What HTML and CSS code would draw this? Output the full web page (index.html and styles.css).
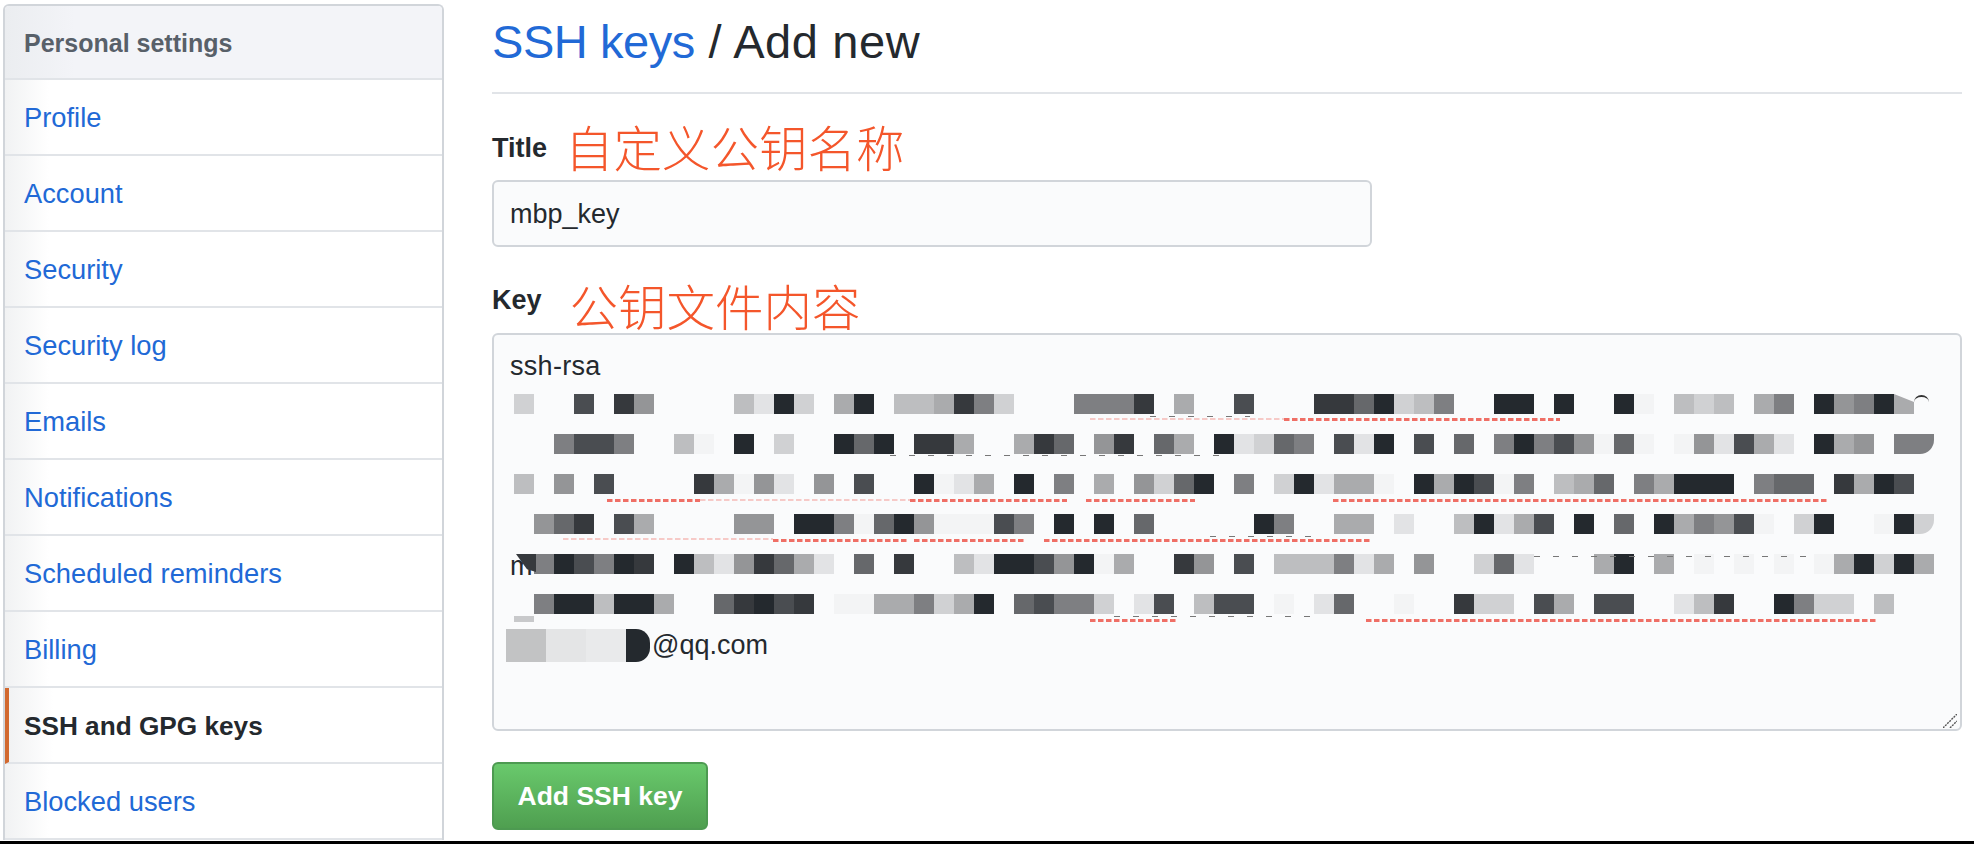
FILE: index.html
```html
<!DOCTYPE html>
<html lang="en">
<head>
    <meta charset="UTF-8">
    <title>SSH keys / Add new</title>
    <link rel="stylesheet" href="styles.css">
</head>
<body>
    <div class="page">
        <nav class="sidebar">
            <h3 class="sidebar-title">Personal settings</h3>
            <a class="sidebar-item" href="#">Profile</a>
            <a class="sidebar-item" href="#">Account</a>
            <a class="sidebar-item" href="#">Security</a>
            <a class="sidebar-item" href="#">Security log</a>
            <a class="sidebar-item" href="#">Emails</a>
            <a class="sidebar-item" href="#">Notifications</a>
            <a class="sidebar-item" href="#">Scheduled reminders</a>
            <a class="sidebar-item" href="#">Billing</a>
            <a class="sidebar-item selected" href="#">SSH and GPG keys</a>
            <a class="sidebar-item" href="#">Blocked users</a>
        </nav>

        <main class="content">
            <h1 class="page-title"><a href="#">SSH keys</a> / Add new</h1>

            <div class="label-row title-row">
                <label>Title</label>
                <span class="note">自定义公钥名称</span>
            </div>
            <div class="input-box">mbp_key</div>

            <div class="label-row key-row">
                <label>Key</label>
                <span class="note">公钥文件内容</span>
            </div>
            <div class="key-box">
                <div class="key-line">ssh-rsa</div>
                <div class="mosaic" id="mosaic">
                    <span class="scrap-m">m</span>
                    <span class="scrap-wedge"></span>
                    <span class="scrap-arc"></span>
                </div>
                <div class="email-line">
                    <span class="blur">
                        <i class="blur-a"></i><i class="blur-b"></i><i class="blur-c"></i><i class="blur-d"></i>
                    </span>
                    <span>@qq.com</span>
                </div>
                <svg class="grip" width="14" height="14" viewBox="0 0 14 14">
                    <path d="M0 14 14 0M7 14l7-7" stroke="#555" stroke-width="1.4" stroke-dasharray="2 1" fill="none"/>
                </svg>
            </div>

            <button class="add-button">Add SSH key</button>
        </main>
    </div>
    <div class="bottom-edge"></div>

    <script>
        // Gray level of each 20px block, one string per blurred line ('.' = nothing there)
        const ROWS = [
            '3..9.a6....42b3.5b.445a73...777a.5..9...aa8b347..bb.b..b1.434.57.b67b5',
            '..7997..41.b.3..b8b.aa5..5a8.6a.85.b2387.92b.9.8.7b796181.162952.b56.77',
            '4.6.9....a5162.6.9..b125.b.7.5.638b.7.3b2551.b5b917.458.75bbb.788.a5b9',
            '.68a.95....66.bb718b611197.b.b.8.....b7..55.2..4b259.b.8.b57691.3b..1b3',
            '.7b97ba.b426a852.8.a..42bb96b15..a6.9.444725.6..382...5b.5.1.1.1.15b3b5',
            '.7bb4bb5..8ab9a.1155735b.89773.29.499.1.28..1..a33.95.99..24a..b733.4'
        ];

        // Leftovers around the blocks: [x, y, width], relative to the mosaic
        const SQUIGGLES = [
            [770, 24, 276], [93, 105, 93], [396, 105, 157], [572, 105, 109], [819, 105, 494],
            [259, 145, 135], [400, 145, 110], [530, 145, 326],
            [576, 225, 86], [852, 225, 510]
        ];
        const FAINT = [[576, 24, 194], [186, 105, 210], [49, 144, 210]];
        const RESIDUE = [
            [636, 22, 100], [376, 61, 336], [696, 142, 110], [1020, 162, 280], [600, 222, 206]
        ];

        const mosaic = document.getElementById('mosaic');

        ROWS.forEach((row) => {
            for (const ch of row) {
                const cell = document.createElement('span');
                if (ch !== '.') cell.className = 'g' + ch;
                mosaic.appendChild(cell);
            }
            // fill up the row so the next one starts on column 0
            for (let i = row.length; i < 71; i++) {
                mosaic.appendChild(document.createElement('span'));
            }
        });

        function addLine(item, className) {
            const line = document.createElement('div');
            line.className = className;
            line.style.left = item[0] + 'px';
            line.style.top = item[1] + 'px';
            line.style.width = item[2] + 'px';
            mosaic.appendChild(line);
        }
        RESIDUE.forEach((s) => addLine(s, 'residue'));
        SQUIGGLES.forEach((s) => addLine(s, 'squiggle'));
        FAINT.forEach((s) => addLine(s, 'squiggle faint'));
    </script>
</body>
</html>
```

FILE: styles.css
```css
* {
    box-sizing: border-box;
}
html, body {
    height: 100%;
}
body {
    margin: 0;
    display: flex;
    flex-direction: column;
    overflow: hidden;
    background-color: #fff;
    color: #24292e;
    font-family: "Liberation Sans", Arial, sans-serif;
    font-size: 27px;
    line-height: 40px;
}
a {
    color: #2169d6;
    text-decoration: none;
}
.page {
    flex: 1;
    min-height: 0;
    display: flex;
    align-items: flex-start;
    padding: 4px 0 0 3px;
}
.bottom-edge {
    height: 3px;
    background-color: #000;
}

/* sidebar */
.sidebar {
    flex: none;
    width: 441px;
    display: flex;
    flex-direction: column;
    border: 2px solid #d1d5da;
    border-bottom: none;
    border-radius: 6px 6px 0 0;
}
.sidebar-title {
    margin: 0;
    height: 74px;
    padding: 17px 19px 0;
    border-bottom: 2px solid #e1e4e8;
    border-radius: 4px 4px 0 0;
    background: linear-gradient(90deg, #ebedf0, #f3f4f8 70px);
    color: #586069;
    font-size: 25px;
    font-weight: bold;
}
.sidebar-item {
    height: 76px;
    padding: 18px 19px 0;
    border-bottom: 2px solid #e1e4e8;
    background: linear-gradient(90deg, #f1f2f3, #fff 44px);
    font-size: 27.3px;
}
.sidebar-item.selected {
    padding-left: 15px;
    border-left: 4px solid #d2692f;
    color: #24292e;
    font-size: 26.2px;
    font-weight: bold;
}

/* main column */
.content {
    flex: none;
    width: 1470px;
    margin-left: 48px;
}
.page-title {
    margin: 8px 0 0;
    padding-bottom: 20px;
    border-bottom: 2px solid #e1e4e8;
    font-size: 47px;
    font-weight: normal;
    line-height: 60px;
    letter-spacing: 0.6px;
}
.page-title a {
    letter-spacing: -0.45px;
}
.label-row {
    display: flex;
    align-items: center;
    height: 56px;
}
.label-row label {
    font-weight: bold;
}
.title-row {
    margin-top: 24px;
    margin-bottom: 6px;
}
.title-row label {
    margin-top: 4px;
}
.title-row .note {
    margin-left: 18px;
}
.key-row {
    margin-top: 30px;
}
.key-row label {
    margin-bottom: 10px;
}
.key-row .note {
    margin-left: 28px;
}
.note {
    color: #f4562b;
    font-family: "Noto Sans CJK SC", sans-serif;
    font-size: 48.5px;
    font-weight: 300;
    line-height: 56px;
}
.input-box {
    width: 880px;
    height: 67px;
    padding: 12px 16px;
    border: 2px solid #d1d5da;
    border-radius: 6px;
    background-color: #fafbfc;
}

/* key textarea */
.key-box {
    position: relative;
    height: 398px;
    padding: 11px 16px;
    border: 2px solid #d1d5da;
    border-radius: 6px;
    background-color: #fafbfc;
}
.key-line {
    letter-spacing: 0.3px;
}
.mosaic {
    position: relative;
    display: grid;
    grid-template-columns: repeat(71, 20px);
    grid-auto-rows: 20px;
    row-gap: 20px;
    margin: 8px 0 0 4px;
}
.g1 { background-color: #f3f4f5; }
.g2 { background-color: #e2e3e5; }
.g3 { background-color: #d0d1d3; }
.g4 { background-color: #bdbec0; }
.g5 { background-color: #aaabad; }
.g6 { background-color: #949597; }
.g7 { background-color: #7e7f82; }
.g8 { background-color: #66686b; }
.g9 { background-color: #4a4d51; }
.ga { background-color: #36393d; }
.gb { background-color: #24292e; }

/* the blocks that were cut off at the end of a line */
.mosaic span:nth-child(73) {
    clip-path: polygon(0 0, 100% 40%, 100% 100%, 0 100%);
}
.mosaic span:nth-child(145),
.mosaic span:nth-child(287) {
    border-radius: 0 0 14px 0;
}
.scrap-m {
    position: absolute;
    left: -4px;
    top: 152px;
    line-height: 40px;
}
.scrap-wedge {
    position: absolute;
    left: 2px;
    top: 160px;
    width: 20px;
    height: 18px;
    background-color: #36393d;
    clip-path: polygon(0 0, 100% 0, 100% 100%, 55% 85%);
}
.scrap-arc {
    position: absolute;
    left: 1400px;
    top: 1px;
    width: 15px;
    height: 14px;
    border-top: 2px solid #333;
    border-radius: 50%;
}
.squiggle {
    position: absolute;
    height: 3px;
    background: repeating-linear-gradient(90deg, #ef6f66 0 5px, #f7b5b0 5px 6px, transparent 6px 8px);
}
.squiggle.faint {
    height: 2px;
    opacity: 0.35;
}
.residue {
    position: absolute;
    height: 1px;
    background: repeating-linear-gradient(90deg, #777 0 6px, transparent 6px 19px);
}
.email-line {
    display: flex;
    align-items: center;
    margin: 11px 0 0 -4px;
}
.blur {
    position: relative;
    display: flex;
    height: 33px;
    margin-right: 2px;
}
.blur::before {
    content: "";
    position: absolute;
    left: 8px;
    top: -13px;
    width: 20px;
    height: 6px;
    background-color: #c8c9cb;
}
.blur i {
    display: block;
    width: 40px;
}
.blur-a { background-color: #c2c3c4; }
.blur-b { background-color: #e4e5e6; }
.blur-c { background-color: #e9eaeb; }
.blur .blur-d {
    width: 24px;
    border-radius: 0 14px 14px 0;
    background-color: #24292e;
}
.grip {
    position: absolute;
    right: 3px;
    bottom: 1px;
}

.add-button {
    display: block;
    width: 216px;
    height: 68px;
    margin-top: 31px;
    border: 2px solid #4d9a51;
    border-radius: 6px;
    background: linear-gradient(#69c96c, #4f9f50);
    color: #fff;
    font-family: inherit;
    font-size: 26.5px;
    font-weight: bold;
}
```
